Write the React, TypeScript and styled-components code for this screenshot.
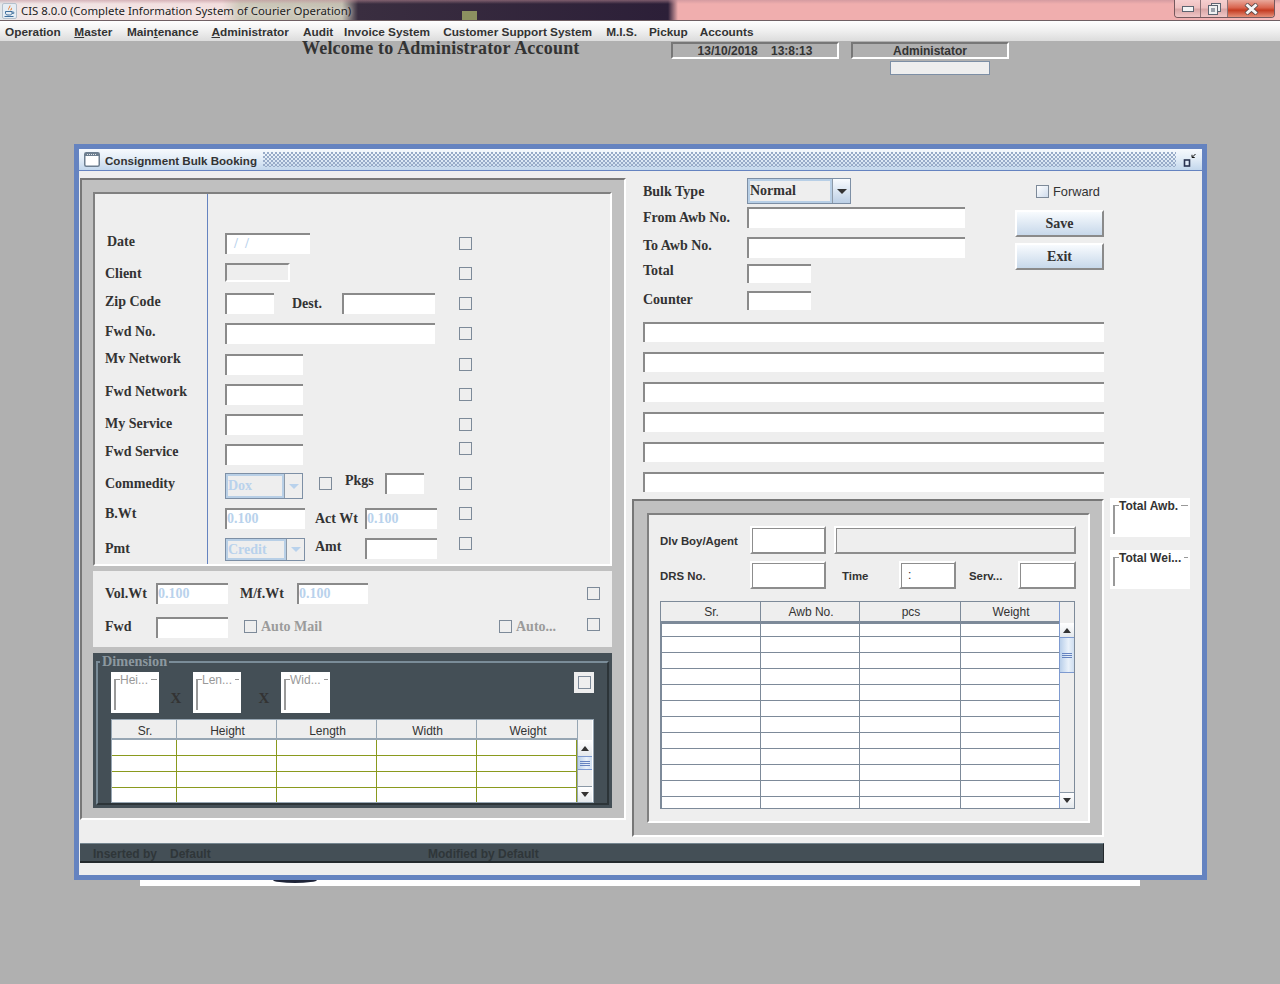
import React from "react";
import styled, { createGlobalStyle, css } from "styled-components";

const SANS = `"Liberation Sans", Arial, sans-serif`;
const SERIF = `"Liberation Serif", "Times New Roman", serif`;

const Global = createGlobalStyle`
  html, body { margin: 0; padding: 0; background: #b0b0b0; }
  body { font-family: ${SANS}; color: #333; overflow: hidden; }
  * { box-sizing: border-box; }
`;

type Place = { $ml?: number; $mt?: number };
const place = css<Place>`
  margin-left: ${(p) => p.$ml ?? 0}px;
  margin-top: ${(p) => p.$mt ?? 0}px;
  flex: none;
`;

const Page = styled.div`
  width: 1280px;
  height: 984px;
  background: #b0b0b0;
  overflow: hidden;
`;

/* ---------- OS title bar ---------- */
const TitleBar = styled.div`
  height: 21px;
  display: flex;
  align-items: flex-start;
  border-bottom: 1px solid #6f5f63;
  background:
    linear-gradient(#8c9160, #8c9160) 462px 11px / 15px 9px no-repeat,
    linear-gradient(180deg, rgba(190, 140, 150, 0.55) 0, rgba(190, 140, 150, 0) 4px),
    linear-gradient(90deg, #e3e7ea 0, #f1e6e6 18px, #f3dede 222px, #cdc9ba 240px, #c4c0b2 342px, #3a2e40 358px, #2c1f38 668px, #f0aeae 678px, #f0aeae 1170px, #f6bcbc 1280px);
`;
const AppIcon = styled.svg`
  width: 15px;
  height: 16px;
  margin: 3px 0 0 2px;
  flex: none;
`;
const AppTitle = styled.span`
  font: 11.4px/21px "Noto Sans", sans-serif;
  color: #1c1c1c;
  margin-left: 4px;
  white-space: nowrap;
  text-shadow: 0 0 4px rgba(255, 255, 255, 0.8);
`;
const Controls = styled.div`
  margin-left: auto;
  margin-right: 5px;
  display: flex;
  height: 18px;
  border: 1px solid #75585c;
  border-top: none;
  border-radius: 0 0 4px 4px;
  overflow: hidden;
  flex: none;
`;
const Control = styled.div<{ $w: number; $close?: boolean }>`
  width: ${(p) => p.$w}px;
  display: flex;
  align-items: center;
  justify-content: center;
  border-right: ${(p) => (p.$close ? "none" : "1px solid #8d7377")};
  background: ${(p) =>
    p.$close
      ? "linear-gradient(180deg, #e9a99c 0, #d9654f 45%, #c43c22 60%, #e58f78 100%)"
      : "linear-gradient(180deg, #f6cfcf 0, #eec0c0 45%, #d9a6a6 55%, #f0c6c6 100%)"};
`;

/* ---------- Menu ---------- */
const MenuBar = styled.nav`
  height: 20px;
  display: flex;
  align-items: center;
  gap: 13px;
  padding: 2px 0 0 5px;
  background: linear-gradient(180deg, #ffffff 0, #f1f1f1 45%, #dcdcdc 100%);
`;
const MenuItem = styled.span<{ $ml?: number }>`
  margin-left: ${(p) => p.$ml ?? 0}px;
  font: bold 11.82px/18px ${SANS};
  color: #333;
  white-space: nowrap;
  u { text-decoration-thickness: 1px; text-underline-offset: 1px; }
`;

/* ---------- Header strip ---------- */
const Header = styled.header`
  height: 103px;
  display: flex;
  align-items: flex-start;
  padding-top: 1px;
`;
const Welcome = styled.h1`
  margin: -5px 0 0 302px;
  width: 369px;
  flex: none;
  font: bold 18px/22px ${SERIF};
  letter-spacing: 0.2px;
  color: #333;
  white-space: nowrap;
`;
const Sunken = styled.div<{ $w: number } & Place>`
  ${place}
  width: ${(p) => p.$w}px;
  height: 17px;
  border: 2px solid;
  border-color: #777 #fff #fff #777;
  font: bold 12px/14px ${SANS};
  color: #333;
  text-align: center;
  white-space: pre;
`;
const AdminColumn = styled.div`
  margin-left: 12px;
  width: 158px;
  flex: none;
`;
const AdminBox = styled.div`
  width: 100px;
  height: 14px;
  margin: 2px 0 0 39px;
  background: #eee;
  border: 1px solid #7d8fa5;
`;

/* ---------- Internal frame ---------- */
const Frame = styled.section`
  margin-left: 74px;
  width: 1133px;
  height: 736px;
  border: 5px solid #6583c0;
  background: #eee;
`;
const FrameTitle = styled.div`
  height: 22px;
  display: flex;
  align-items: center;
  padding-left: 5px;
  border-bottom: 1px solid #6583c0;
  background: linear-gradient(180deg, #f6f9fd 0, #e6eff8 40%, #c3d7ec 100%);
`;
const FrameName = styled.span`
  font: bold 11.6px/18px ${SANS};
  color: #333;
  margin: 2px 0 0 5px;
  white-space: nowrap;
`;
const Dither = styled.div`
  flex: 1;
  height: 15px;
  margin: 0 7px 0 6px;
  background-image: radial-gradient(circle at 1px 1px, #98abc8 0.9px, transparent 1px),
    radial-gradient(circle at 1px 1px, #98abc8 0.9px, transparent 1px);
  background-size: 4px 4px;
  background-position: 0 0, 2px 2px;
`;
const IconSvg = styled.svg`
  flex: none;
`;
const IconifyIcon = styled(IconSvg)`
  margin-right: 5px;
`;
const FrameBody = styled.div`
  display: flex;
  align-items: flex-start;
  padding-top: 7px;
`;

/* ---------- Panels ---------- */
const LeftPanel = styled.div`
  width: 546px;
  height: 642px;
  margin-left: 1px;
  flex: none;
  background: #c0c0c0;
  border: 2px solid;
  border-color: #777 #fff #fff #777;
  padding: 12px 12px 0 11px;
  display: flex;
  flex-direction: column;
  gap: 5px;
`;
const MainPanel = styled.div`
  height: 374px;
  display: flex;
  background: #eee;
  border: 2px solid;
  border-color: #808080 #fff #fff #808080;
`;
const LabelColumn = styled.div`
  width: 113px;
  padding: 40px 0 0 10px;
  border-right: 1px solid #6583c0;
  flex: none;
`;
const LabelSlot = styled.div<{ $h: number; $ml?: number }>`
  height: ${(p) => p.$h}px;
  padding-left: ${(p) => p.$ml ?? 0}px;
`;
const FieldColumn = styled.div`
  width: 264px;
  padding: 39px 0 0 17px;
  flex: none;
`;
const FieldRow = styled.div<{ $h: number }>`
  height: ${(p) => p.$h}px;
  display: flex;
  align-items: flex-start;
`;
const SerifLabel = styled.span<{ $w?: number; $muted?: boolean } & Place>`
  ${place}
  display: block;
  ${(p) => (p.$w ? `width: ${p.$w}px;` : "")}
  font: bold 14px/16px ${SERIF};
  color: ${(p) => (p.$muted ? "#9b9b9b" : "#333")};
  white-space: nowrap;
`;
const Field = styled.div<{ $w: number; $h?: number; $off?: boolean } & Place>`
  ${place}
  width: ${(p) => p.$w}px;
  height: ${(p) => p.$h ?? 21}px;
  background: ${(p) => (p.$off ? "#eee" : "#fff")};
  border-style: solid;
  border-width: 2px 0 0 2px;
  border-color: #8a8a8a;
  ${(p) => (p.$off ? "border-right: 2px solid #fff; border-bottom: 2px solid #fff;" : "")}
  font: bold 14px/17px ${SERIF};
  color: #b9d2ec;
  white-space: pre;
  overflow: hidden;
`;
const Check = styled.span<{ $auto?: boolean; $mr?: number; $soft?: boolean } & Place>`
  ${place}
  ${(p) => (p.$auto ? "margin-left: auto;" : "")}
  ${(p) => (p.$mr ? `margin-right: ${p.$mr}px;` : "")}
  display: block;
  width: 13px;
  height: 13px;
  border: 1px solid #7d8a99;
  background: ${(p) => (p.$soft ? "linear-gradient(135deg, #fff, #cfdced)" : "transparent")};
`;
const Combo = styled.div<{ $w: number; $h: number } & Place>`
  ${place}
  width: ${(p) => p.$w}px;
  height: ${(p) => p.$h}px;
  display: flex;
  border: 1px solid #7d8fa5;
`;
const ComboText = styled.div<{ $off?: boolean }>`
  flex: 1;
  display: flex;
  align-items: center;
  border: 2px solid #b8cfe6;
  background: #eee;
  font: bold 14px/16px ${SERIF};
  color: ${(p) => (p.$off ? "#b9d2ec" : "#333")};
`;
const ComboArrow = styled.div<{ $off?: boolean }>`
  width: 18px;
  flex: none;
  display: flex;
  align-items: center;
  justify-content: center;
  border-left: 1px solid #8d9aa8;
  background: ${(p) => (p.$off ? "#eee" : "linear-gradient(180deg, #f8fbfe, #bcd0e6)")};
  &::after {
    content: "";
    border-left: 5px solid transparent;
    border-right: 5px solid transparent;
    border-top: 5px solid ${(p) => (p.$off ? "#b9d2ec" : "#333")};
  }
`;

const SubPanel = styled.div`
  height: 76px;
  margin-top: 0;
  background: #eee;
  padding: 12px 0 0 12px;
`;

/* ---------- Dimension ---------- */
const DimensionPanel = styled.div`
  height: 155px;
  margin-top: 1px;
  background: #444f56;
  padding: 8px 3px 3px 3px;
`;
const DimensionGroup = styled.fieldset`
  position: relative;
  margin: 0;
  height: 144px;
  padding: 9px 0 0 13px;
  border-style: solid;
  border-width: 2px;
  border-color: #7a8c98 #2c3438 #2c3438 #7a8c98;
`;
const DimensionLegend = styled.span`
  position: absolute;
  left: 2px;
  top: -10px;
  padding: 0 2px;
  background: #444f56;
  font: bold 14.3px/16px ${SERIF};
  color: #8c989f;
`;
const DimensionTop = styled.div`
  height: 41px;
  width: 483px;
  display: flex;
  align-items: flex-start;
`;
const GroupCard = styled.div<{ $w: number; $h: number } & Place>`
  ${place}
  width: ${(p) => p.$w}px;
  height: ${(p) => p.$h}px;
  background: #fff;
  padding: 7px 2px 3px 3px;
`;
const GroupLine = styled.div`
  position: relative;
  height: 100%;
  border-top: 1px solid #999;
  border-left: 2px solid #999;
`;
const GroupTitle = styled.span<{ $strong?: boolean }>`
  position: absolute;
  left: 4px;
  top: -7px;
  padding-right: 3px;
  background: #fff;
  font: ${(p) => (p.$strong ? "bold" : "normal")} 12px/15px ${SANS};
  color: ${(p) => (p.$strong ? "#333" : "#999")};
  white-space: nowrap;
`;
const Times = styled.span<{ $w: number; $pl?: number }>`
  width: ${(p) => p.$w}px;
  margin-top: 18px;
  padding-left: ${(p) => p.$pl ?? 0}px;
  flex: none;
  text-align: center;
  font: bold 15px/16px ${SERIF};
  color: #333;
`;
const CheckTile = styled.div`
  margin-left: auto;
  width: 20px;
  height: 21px;
  background: #eee;
  display: flex;
  align-items: center;
  justify-content: center;
`;

/* ---------- Tables ---------- */
const TableShell = styled.div<{ $w: number; $h: number; $line: string } & Place>`
  ${place}
  width: ${(p) => p.$w}px;
  height: ${(p) => p.$h}px;
  display: flex;
  background: #fff;
  border: 1px solid ${(p) => p.$line};
  overflow: hidden;
`;
const GridTable = styled.table<{
  $grid: string;
  $line: string;
  $head: number;
  $first: number;
  $headPad: number;
  $edge?: boolean;
  $inset?: boolean;
}>`
  flex: none;
  align-self: flex-start;
  table-layout: fixed;
  border-collapse: separate;
  border-spacing: 0;
  th {
    height: ${(p) => p.$head}px;
    padding: ${(p) => p.$headPad}px 0 0 2px;
    background: #eee;
    border-right: 1px solid ${(p) => p.$line};
    border-bottom: 2px solid ${(p) => p.$line};
    font: normal 12px/14px ${SANS};
    color: #333;
  }
  td {
    height: 16px;
    padding: 0;
    background: #fff;
    border-right: 1px solid ${(p) => p.$grid};
    border-bottom: 1px solid ${(p) => p.$grid};
  }
  tbody tr:first-child td {
    height: ${(p) => p.$first}px;
    ${(p) => (p.$inset ? `border-top: 1px solid ${p.$grid};` : "")}
  }
  ${(p) => (p.$inset ? `td:first-child { border-left: 1px solid ${p.$grid}; }` : "")}
  th:last-child { border-right: none; }
  ${(p) => (p.$edge ? "" : "td:last-child { border-right: none; }")}
`;
const ScrollBar = styled.div<{ $line: string }>`
  width: 15px;
  flex: none;
  display: flex;
  flex-direction: column;
  background: #eee;
  border-left: 1px solid ${(p) => p.$line};
`;
const ScrollCorner = styled.div<{ $h: number }>`
  height: ${(p) => p.$h}px;
  flex: none;
  background: #eee;
`;
const ScrollButton = styled.div<{ $h: number; $down?: boolean }>`
  height: ${(p) => p.$h}px;
  flex: none;
  display: flex;
  align-items: center;
  justify-content: center;
  background: linear-gradient(180deg, #fff, #e4e8ec);
  ${(p) => (p.$down ? "border-top: 1px solid #8a98a6;" : "")}
  &::after {
    content: "";
    border-left: 4px solid transparent;
    border-right: 4px solid transparent;
    ${(p) => (p.$down ? "border-top: 5px solid #333;" : "border-bottom: 5px solid #333;")}
  }
`;
const ScrollThumb = styled.div<{ $h: number }>`
  height: ${(p) => p.$h}px;
  flex: none;
  display: flex;
  flex-direction: column;
  justify-content: center;
  gap: 1px;
  padding: 0 2px;
  border: 1px solid #7d9ad0;
  border-width: 1px 0;
  background: linear-gradient(90deg, #b9cfea, #e9f1fa 60%, #cfdef0);
  i { display: block; height: 1px; background: #6583c0; }
`;
const ScrollTrack = styled.div`
  flex: 1;
  background: #eee;
`;

/* ---------- Right column ---------- */
const RightColumn = styled.div`
  width: 576px;
  flex: none;
`;
const RightTop = styled.div`
  height: 144px;
  margin-left: 17px;
  display: flex;
`;
const BookingFields = styled.div`
  width: 372px;
  flex: none;
`;
const BookingRow = styled.div<{ $h: number }>`
  height: ${(p) => p.$h}px;
  display: flex;
  align-items: flex-start;
`;
const Actions = styled.div`
  width: 89px;
  padding-top: 7px;
  flex: none;
`;
const ForwardRow = styled.div`
  display: flex;
  align-items: center;
  height: 13px;
  padding-left: 21px;
  gap: 4px;
  font: normal 12.8px/13px ${SANS};
  color: #333;
  white-space: nowrap;
`;
const ActionButton = styled.button<Place>`
  ${place}
  display: block;
  width: 89px;
  height: 27px;
  padding: 0;
  border: 2px solid;
  border-color: #fff #8a8a8a #8a8a8a #fff;
  background: linear-gradient(180deg, #f8fbfe, #c7d8ea);
  font: bold 14px/16px ${SERIF};
  color: #333;
`;
const Notes = styled.div`
  margin-left: 17px;
  display: flex;
  flex-direction: column;
  gap: 10px;
`;
const Lower = styled.div`
  margin: 6px 0 0 6px;
  display: flex;
  align-items: flex-start;
`;
const DeliveryOuter = styled.div`
  width: 472px;
  height: 338px;
  margin-top: 1px;
  flex: none;
  background: #c0c0c0;
  border: 2px solid;
  border-color: #777 #fff #fff #777;
  padding: 12px 0 0 13px;
`;
const DeliveryInner = styled.div`
  width: 443px;
  height: 310px;
  background: #eee;
  border: 2px solid;
  border-color: #808080 #fff #fff #808080;
  padding: 11px 0 0 11px;
`;
const DeliveryRow = styled.div<{ $mt?: number }>`
  height: 28px;
  margin-top: ${(p) => p.$mt ?? 0}px;
  display: flex;
  align-items: center;
`;
const SansLabel = styled.span<{ $w: number; $ml?: number }>`
  width: ${(p) => p.$w}px;
  margin-left: ${(p) => p.$ml ?? 0}px;
  padding-top: 2px;
  flex: none;
  font: bold 11.4px/14px ${SANS};
  color: #333;
  white-space: nowrap;
`;
const EtchedField = styled.div<{ $w: number; $off?: boolean; $ml?: number }>`
  width: ${(p) => p.$w}px;
  height: 28px;
  margin-left: ${(p) => p.$ml ?? 0}px;
  flex: none;
  padding-left: 7px;
  border: 2px solid;
  border-color: #fff #8d8d8d #8d8d8d #fff;
  box-shadow: inset 1px 1px 0 #8d8d8d;
  background: ${(p) => (p.$off ? "#eee" : "#fff")};
  font: normal 12px/24px ${SANS};
  color: #333;
`;
const Totals = styled.div`
  margin-left: 6px;
  width: 80px;
  flex: none;
  display: flex;
  flex-direction: column;
  gap: 13px;
`;

/* ---------- Bottom ---------- */
const AuditBar = styled.div`
  width: 1024px;
  height: 20px;
  margin: 6px 0 0 1px;
  padding-top: 2px;
  display: flex;
  align-items: center;
  background: #444f56;
  border-top: 1px solid #75858f;
  border-bottom: 2px solid #23292c;
  border-right: 1px solid #23292c;
  font: bold 12px/14px ${SANS};
  color: #2f3639;
`;
const AuditText = styled.span<{ $w: number; $ml?: number }>`
  width: ${(p) => p.$w}px;
  margin-left: ${(p) => p.$ml ?? 0}px;
  flex: none;
  white-space: nowrap;
`;
const BehindStrip = styled.div`
  position: relative;
  width: 1000px;
  height: 6px;
  margin-left: 140px;
  background: #fff;
`;
const BehindMark = styled.span`
  position: absolute;
  left: 133px;
  top: 0;
  width: 44px;
  height: 3px;
  border-radius: 0 0 50% 50% / 0 0 100% 100%;
  background: #1e2438;
`;

const leftLabels: { text: string; h: number; ml?: number }[] = [
  { text: "Date", h: 32, ml: 2 },
  { text: "Client", h: 28 },
  { text: "Zip Code", h: 30 },
  { text: "Fwd No.", h: 27 },
  { text: "Mv Network", h: 33 },
  { text: "Fwd Network", h: 32 },
  { text: "My Service", h: 28 },
  { text: "Fwd Service", h: 32 },
  { text: "Commedity", h: 30 },
  { text: "B.Wt", h: 35 },
  { text: "Pmt", h: 16 },
];

const Grip = () => (
  <>
    <i />
    <i />
    <i />
  </>
);

function DataTable(props: {
  heads: string[];
  widths: number[];
  rows: number;
  grid: string;
  line: string;
  head: number;
  first: number;
  headPad: number;
  edge?: boolean;
  inset?: boolean;
}) {
  const { heads, widths, rows, grid, line, head, first, headPad, edge, inset } = props;
  return (
    <GridTable
      $grid={grid}
      $line={line}
      $head={head}
      $first={first}
      $headPad={headPad}
      $edge={edge}
      $inset={inset}
      style={{ width: widths.reduce((a, b) => a + b, 0) }}
    >
      <colgroup>
        {widths.map((w, i) => (
          <col key={i} style={{ width: w }} />
        ))}
      </colgroup>
      <thead>
        <tr>
          {heads.map((h) => (
            <th key={h}>{h}</th>
          ))}
        </tr>
      </thead>
      <tbody>
        {Array.from({ length: rows }, (_, r) => (
          <tr key={r}>
            {heads.map((h) => (
              <td key={h} />
            ))}
          </tr>
        ))}
      </tbody>
    </GridTable>
  );
}

export default function App() {
  return (
    <Page>
      <Global />
      <TitleBar>
        <AppIcon viewBox="0 0 15 16">
          <rect x="0.5" y="0.5" width="14" height="15" rx="1.5" fill="#e6edf4" stroke="#b4c0cc" />
          <path d="M8 2 C9.5 4 6 5 7.2 7.5 C5 5.8 7.6 4.2 8 2 Z" fill="#e2701c" />
          <path d="M9.5 4.5 C9.2 6 8 6.4 8.4 7.8 C9.8 6.8 10.4 5.8 9.5 4.5 Z" fill="#e2701c" />
          <path d="M3.5 8.5 H10 V10.2 C10 11.4 9 12 7.5 12 H6 C4.5 12 3.5 11.4 3.5 10.2 Z" fill="none" stroke="#3f6f9c" strokeWidth="1" />
          <path d="M10 9 H11.8 V10.5 H10" fill="none" stroke="#3f6f9c" strokeWidth="0.8" />
          <path d="M2.5 13.5 H11.5" stroke="#3f6f9c" strokeWidth="1" />
        </AppIcon>
        <AppTitle>CIS 8.0.0 (Complete Information System of Courier Operation)</AppTitle>
        <Controls>
          <Control $w={26}>
            <IconSvg width="12" height="6" viewBox="0 0 12 6">
              <rect x="0.5" y="0.5" width="11" height="5" fill="#f4f4f4" stroke="#5d6470" />
            </IconSvg>
          </Control>
          <Control $w={27}>
            <IconSvg width="13" height="12" viewBox="0 0 13 12">
              <rect x="3.5" y="0.5" width="9" height="8" fill="#f0f0f0" stroke="#5d6470" />
              <rect x="0.5" y="2.5" width="9" height="9" fill="#f0f0f0" stroke="#5d6470" />
              <rect x="3" y="5" width="4" height="4" fill="#9aa0aa" />
            </IconSvg>
          </Control>
          <Control $w={46} $close>
            <IconSvg width="15" height="12" viewBox="0 0 15 12">
              <path d="M2 1 L13 11 M13 1 L2 11" stroke="#5a4a4a" strokeWidth="4.4" />
              <path d="M2.5 1.5 L12.5 10.5 M12.5 1.5 L2.5 10.5" stroke="#f6f6f6" strokeWidth="3" />
            </IconSvg>
          </Control>
        </Controls>
      </TitleBar>

      <MenuBar>
        <MenuItem>Operation</MenuItem>
        <MenuItem $ml={0.5}>
          <u>M</u>aster
        </MenuItem>
        <MenuItem $ml={1.5}>
          Main<u>t</u>enance
        </MenuItem>
        <MenuItem>
          <u>A</u>dministrator
        </MenuItem>
        <MenuItem $ml={1}>Audit</MenuItem>
        <MenuItem $ml={-2}>Invoice System</MenuItem>
        <MenuItem>Customer Support System</MenuItem>
        <MenuItem $ml={1}>M.I.S.</MenuItem>
        <MenuItem $ml={-1}>Pickup</MenuItem>
        <MenuItem $ml={-1}>Accounts</MenuItem>
      </MenuBar>

      <Header>
        <Welcome>Welcome to Administrator Account</Welcome>
        <Sunken $w={168}>{"13/10/2018    13:8:13"}</Sunken>
        <AdminColumn>
          <Sunken $w={158}>Administator</Sunken>
          <AdminBox />
        </AdminColumn>
      </Header>

      <Frame>
        <FrameTitle>
          <IconSvg width="16" height="15" viewBox="0 0 16 15">
            <rect x="0.75" y="0.75" width="14.5" height="13.5" rx="1.5" fill="#fff" stroke="#6e7f90" strokeWidth="1.5" />
            <rect x="1" y="1" width="14" height="3" fill="#6e7f90" />
            <path d="M3 2.5 H13" stroke="#fff" strokeWidth="0.8" strokeDasharray="1 1" />
          </IconSvg>
          <FrameName>Consignment Bulk Booking</FrameName>
          <Dither />
          <IconifyIcon width="14" height="15" viewBox="0 0 14 15">
            <path d="M12.5 2 L9.5 5" stroke="#111" strokeWidth="1" />
            <path d="M9 2.8 V5.5 H11.7" fill="none" stroke="#111" strokeWidth="1" />
            <rect x="1.5" y="8" width="5" height="6" fill="#dfe9f5" stroke="#2a3350" strokeWidth="1.6" />
          </IconifyIcon>
        </FrameTitle>

        <FrameBody>
          <LeftPanel>
            <MainPanel>
              <LabelColumn>
                {leftLabels.map((l) => (
                  <LabelSlot key={l.text} $h={l.h} $ml={l.ml}>
                    <SerifLabel>{l.text}</SerifLabel>
                  </LabelSlot>
                ))}
              </LabelColumn>
              <FieldColumn>
                <FieldRow $h={30}>
                  <Field $w={85}>{"  /  /"}</Field>
                  <Check $auto $mt={4} />
                </FieldRow>
                <FieldRow $h={30}>
                  <Field $w={65} $h={19} $off />
                  <Check $auto $mt={4} />
                </FieldRow>
                <FieldRow $h={30}>
                  <Field $w={49} />
                  <SerifLabel $ml={18} $mt={3} $w={50}>
                    Dest.
                  </SerifLabel>
                  <Field $w={93} />
                  <Check $auto $mt={4} />
                </FieldRow>
                <FieldRow $h={31}>
                  <Field $w={210} />
                  <Check $auto $mt={4} />
                </FieldRow>
                <FieldRow $h={30}>
                  <Field $w={78} />
                  <Check $auto $mt={4} />
                </FieldRow>
                <FieldRow $h={30}>
                  <Field $w={78} />
                  <Check $auto $mt={4} />
                </FieldRow>
                <FieldRow $h={28}>
                  <Field $w={78} />
                  <Check $auto $mt={4} />
                </FieldRow>
                <FieldRow $h={31}>
                  <Field $w={78} $mt={2} />
                  <Check $auto />
                </FieldRow>
                <FieldRow $h={34}>
                  <Combo $w={78} $h={26}>
                    <ComboText $off>Dox</ComboText>
                    <ComboArrow $off />
                  </Combo>
                  <Check $ml={16} $mt={4} />
                  <SerifLabel $ml={13} $w={40}>
                    Pkgs
                  </SerifLabel>
                  <Field $w={39} />
                  <Check $auto $mt={4} />
                </FieldRow>
                <FieldRow $h={30}>
                  <Field $w={80} $mt={1}>
                    0.100
                  </Field>
                  <SerifLabel $ml={10} $mt={4} $w={50}>
                    Act Wt
                  </SerifLabel>
                  <Field $w={72} $mt={1}>
                    0.100
                  </Field>
                  <Check $auto />
                </FieldRow>
                <FieldRow $h={25}>
                  <Combo $w={80} $h={23} $mt={1}>
                    <ComboText $off>Credit</ComboText>
                    <ComboArrow $off />
                  </Combo>
                  <SerifLabel $ml={10} $mt={2} $w={50}>
                    Amt
                  </SerifLabel>
                  <Field $w={72} $mt={1} />
                  <Check $auto />
                </FieldRow>
              </FieldColumn>
            </MainPanel>

            <SubPanel>
              <FieldRow $h={34}>
                <SerifLabel $mt={3} $w={51}>
                  Vol.Wt
                </SerifLabel>
                <Field $w={72}>0.100</Field>
                <SerifLabel $ml={12} $mt={3} $w={57}>
                  M/f.Wt
                </SerifLabel>
                <Field $w={71}>0.100</Field>
                <Check $auto $mr={12} $mt={4} />
              </FieldRow>
              <FieldRow $h={30}>
                <SerifLabel $mt={2} $w={51}>
                  Fwd
                </SerifLabel>
                <Field $w={72} />
                <Check $ml={16} $mt={3} />
                <SerifLabel $ml={4} $mt={2} $muted>
                  Auto Mail
                </SerifLabel>
                <Check $auto $mt={3} />
                <SerifLabel $ml={4} $mt={2} $w={71} $muted>
                  Auto...
                </SerifLabel>
                <Check $mr={12} $mt={1} />
              </FieldRow>
            </SubPanel>

            <DimensionPanel>
              <DimensionGroup>
                <DimensionLegend>Dimension</DimensionLegend>
                <DimensionTop>
                  <GroupCard $w={48} $h={41}>
                    <GroupLine>
                      <GroupTitle>Hei...</GroupTitle>
                    </GroupLine>
                  </GroupCard>
                  <Times $w={34}>X</Times>
                  <GroupCard $w={48} $h={41}>
                    <GroupLine>
                      <GroupTitle>Len...</GroupTitle>
                    </GroupLine>
                  </GroupCard>
                  <Times $w={40} $pl={6}>
                    X
                  </Times>
                  <GroupCard $w={49} $h={41}>
                    <GroupLine>
                      <GroupTitle>Wid...</GroupTitle>
                    </GroupLine>
                  </GroupCard>
                  <CheckTile>
                    <Check />
                  </CheckTile>
                </DimensionTop>
                <TableShell $w={483} $h={84} $line="#97a6b3" $mt={6}>
                  <DataTable
                    heads={["Sr.", "Height", "Length", "Width", "Weight"]}
                    widths={[65, 100, 100, 100, 100]}
                    rows={4}
                    grid="#8a9a1e"
                    line="#97a6b3"
                    head={20}
                    first={16}
                    headPad={4}
                    edge
                  />
                  <ScrollBar $line="#97a6b3">
                    <ScrollCorner $h={20} />
                    <ScrollButton $h={16} />
                    <ScrollThumb $h={14}>
                      <Grip />
                    </ScrollThumb>
                    <ScrollTrack />
                    <ScrollButton $h={16} $down />
                  </ScrollBar>
                </TableShell>
              </DimensionGroup>
            </DimensionPanel>
          </LeftPanel>

          <RightColumn>
            <RightTop>
              <BookingFields>
                <BookingRow $h={29}>
                  <SerifLabel $mt={6} $w={104}>
                    Bulk Type
                  </SerifLabel>
                  <Combo $w={104} $h={26}>
                    <ComboText>Normal</ComboText>
                    <ComboArrow />
                  </Combo>
                </BookingRow>
                <BookingRow $h={30}>
                  <SerifLabel $mt={3} $w={104}>
                    From Awb No.
                  </SerifLabel>
                  <Field $w={218} />
                </BookingRow>
                <BookingRow $h={27}>
                  <SerifLabel $mt={1} $w={104}>
                    To Awb No.
                  </SerifLabel>
                  <Field $w={218} />
                </BookingRow>
                <BookingRow $h={27}>
                  <SerifLabel $mt={-1} $w={104}>
                    Total
                  </SerifLabel>
                  <Field $w={64} $h={19} />
                </BookingRow>
                <BookingRow $h={31}>
                  <SerifLabel $mt={1} $w={104}>
                    Counter
                  </SerifLabel>
                  <Field $w={64} $h={19} />
                </BookingRow>
              </BookingFields>
              <Actions>
                <ForwardRow>
                  <Check $soft />
                  Forward
                </ForwardRow>
                <ActionButton $mt={12}>Save</ActionButton>
                <ActionButton $mt={6}>Exit</ActionButton>
              </Actions>
            </RightTop>

            <Notes>
              {[0, 1, 2, 3, 4, 5].map((n) => (
                <Field key={n} $w={461} $h={20} />
              ))}
            </Notes>

            <Lower>
              <DeliveryOuter>
                <DeliveryInner>
                  <DeliveryRow>
                    <SansLabel $w={90}>Dlv Boy/Agent</SansLabel>
                    <EtchedField $w={76} />
                    <EtchedField $w={242} $ml={8} $off />
                  </DeliveryRow>
                  <DeliveryRow $mt={7}>
                    <SansLabel $w={90}>DRS No.</SansLabel>
                    <EtchedField $w={76} />
                    <SansLabel $w={57} $ml={16}>
                      Time
                    </SansLabel>
                    <EtchedField $w={57}>:</EtchedField>
                    <SansLabel $w={49} $ml={13}>
                      Serv...
                    </SansLabel>
                    <EtchedField $w={58} />
                  </DeliveryRow>
                  <TableShell $w={415} $h={208} $line="#7d8a99" $mt={12}>
                    <DataTable
                      heads={["Sr.", "Awb No.", "pcs", "Weight"]}
                      widths={[100, 99, 101, 98]}
                      rows={13}
                      grid="#7d8a99"
                      line="#7d8a99"
                      head={21}
                      first={14}
                      headPad={0}
                      inset
                    />
                    <ScrollBar $line="#7d9ad0">
                      <ScrollCorner $h={21} />
                      <ScrollButton $h={14} />
                      <ScrollThumb $h={36}>
                        <Grip />
                      </ScrollThumb>
                      <ScrollTrack />
                      <ScrollButton $h={16} $down />
                    </ScrollBar>
                  </TableShell>
                </DeliveryInner>
              </DeliveryOuter>
              <Totals>
                <GroupCard $w={80} $h={39}>
                  <GroupLine>
                    <GroupTitle $strong>Total Awb.</GroupTitle>
                  </GroupLine>
                </GroupCard>
                <GroupCard $w={80} $h={39}>
                  <GroupLine>
                    <GroupTitle $strong>Total Wei...</GroupTitle>
                  </GroupLine>
                </GroupCard>
              </Totals>
            </Lower>
          </RightColumn>
        </FrameBody>

        <AuditBar>
          <AuditText $w={77} $ml={13}>
            Inserted by
          </AuditText>
          <AuditText $w={258}>Default</AuditText>
          <AuditText $w={70}>Modified by</AuditText>
          <AuditText $w={60}>Default</AuditText>
        </AuditBar>
      </Frame>
      <BehindStrip>
        <BehindMark />
      </BehindStrip>
    </Page>
  );
}
